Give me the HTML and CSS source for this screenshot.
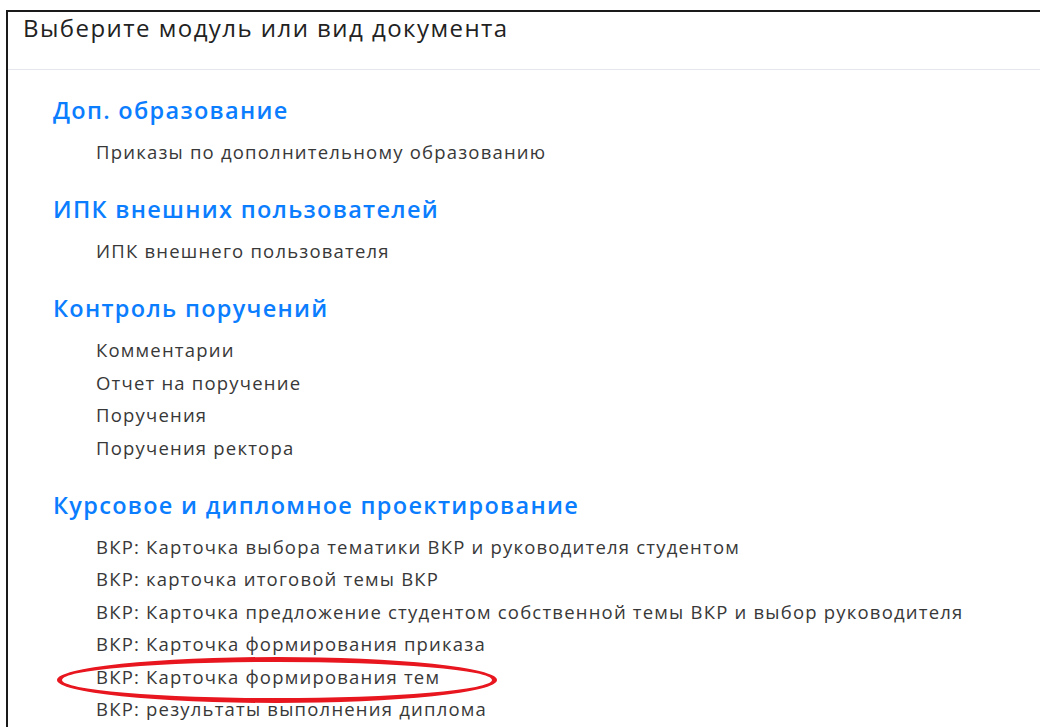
FILE: index.html
```html
<!DOCTYPE html>
<html lang="ru">
<head>
<meta charset="utf-8">
<title>Выберите модуль или вид документа</title>
<link rel="stylesheet" href="styles.css">
</head>
<body>
<div class="dialog">
  <div class="dialog-header">
    <h2 class="dialog-title">Выберите модуль или вид документа</h2>
  </div>
  <div class="dialog-body">
    <section class="module">
      <h3 class="module-title">Доп. образование</h3>
      <ul class="doc-list">
        <li>Приказы по дополнительному образованию</li>
      </ul>
    </section>
    <section class="module">
      <h3 class="module-title">ИПК внешних пользователей</h3>
      <ul class="doc-list">
        <li>ИПК внешнего пользователя</li>
      </ul>
    </section>
    <section class="module">
      <h3 class="module-title">Контроль поручений</h3>
      <ul class="doc-list">
        <li>Комментарии</li>
        <li>Отчет на поручение</li>
        <li>Поручения</li>
        <li>Поручения ректора</li>
      </ul>
    </section>
    <section class="module">
      <h3 class="module-title">Курсовое и дипломное проектирование</h3>
      <ul class="doc-list">
        <li>ВКР: Карточка выбора тематики ВКР и руководителя студентом</li>
        <li>ВКР: карточка итоговой темы ВКР</li>
        <li>ВКР: Карточка предложение студентом собственной темы ВКР и выбор руководителя</li>
        <li>ВКР: Карточка формирования приказа</li>
        <li class="marked">ВКР: Карточка формирования тем</li>
        <li>ВКР: результаты выполнения диплома</li>
      </ul>
    </section>
  </div>
</div>
</body>
</html>
```

FILE: styles.css
```css
html, body {
  margin: 0;
  padding: 0;
  background: #fff;
  overflow: hidden;
}

body {
  font-family: "Open Sans", "Noto Sans", sans-serif;
  color: #212529;
  height: 727px;
}

.dialog {
  margin: 10px 0 0 6px;
  border-top: 2px solid #1a1a1a;
  border-left: 2px solid #1a1a1a;
  min-height: 720px;
}

.dialog-header {
  height: 55px;
  border-bottom: 1px solid #e4e8ed;
  padding: 2px 0 0 15px;
}

.dialog-title {
  margin: 0;
  font-size: 24px;
  font-weight: 400;
  letter-spacing: 1.45px;
  line-height: 27px;
  color: #222;
}

.dialog-body {
  padding: 24px 0 0 45px;
}

.module {
  margin-bottom: 24.5px;
}

.module-title {
  margin: 0 0 10px;
  font-size: 23.5px;
  font-weight: 600;
  letter-spacing: 1.3px;
  line-height: 32px;
  color: #0b7dff;
}

.doc-list {
  list-style: none;
  margin: 0;
  padding: 0 0 0 43px;
}

.doc-list li {
  font-size: 18.5px;
  letter-spacing: 1.2px;
  line-height: 32.5px;
  color: #383838;
}

.marked {
  position: relative;
}

/* hand-drawn red highlight around an entry */
.marked::before {
  content: "";
  position: absolute;
  left: -39px;
  top: -4px;
  width: 430px;
  height: 36px;
  border: 5px solid #e8161e;
  border-radius: 50%;
}
```
